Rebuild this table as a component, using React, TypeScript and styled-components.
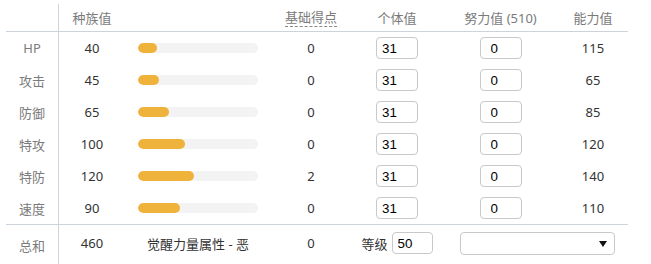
import React from 'react'
import styled, { createGlobalStyle } from 'styled-components'

const GlobalStyle = createGlobalStyle`
  body {
    margin: 0;
    background: #fff;
    font-family: "Noto Sans", "Noto Sans CJK SC", sans-serif;
  }
`

const stats = [
  { label: 'HP', base: 40, total: 115 },
  { label: '攻击', base: 45, total: 65 },
  { label: '防御', base: 65, total: 85 },
  { label: '特攻', base: 100, total: 120 },
  { label: '特防', base: 120, total: 140 },
  { label: '速度', base: 90, total: 110 },
]

const points = [0, 0, 0, 0, 2, 0]

export default function App() {
  return (
    <Page>
      <GlobalStyle />
      <Table>
        <Row $height={27} $line>
          <Label />
          <Head>种族值</Head>
          <Head />
          <Head><Dotted>基础得点</Dotted></Head>
          <Head>个体值</Head>
          <Head>努力值 (510)</Head>
          <Head>能力值</Head>
        </Row>
        {stats.map((s, i) => (
          <Row key={s.label} $height={32} $line={i === stats.length - 1}>
            <Label>{s.label}</Label>
            <Value>{s.base}</Value>
            <Cell>
              <Track>
                <Fill style={{ width: `${(s.base / 255) * 120}px` }} />
              </Track>
            </Cell>
            <Value>{points[i]}</Value>
            <Cell>
              <NumInput defaultValue="31" $pad={5} />
            </Cell>
            <Cell>
              <NumInput defaultValue="0" $pad={10} />
            </Cell>
            <Value>{s.total}</Value>
          </Row>
        ))}
        <Row $height={40}>
          <Label $offset={-4}>总和</Label>
          <Value $offset={-4}>460</Value>
          <Value $offset={-4}>觉醒力量属性 - 恶</Value>
          <Value $offset={-4}>0</Value>
          <Cell $offset={-4}>
            <LevelText>等级</LevelText>
            <NumInput defaultValue="50" $pad={5} $width={41} />
          </Cell>
          <SelectCell $offset={-4}>
            <SelectWrap>
              <Select defaultValue="">
                <option value=""></option>
              </Select>
              <Arrow width="8" height="6" viewBox="0 0 8 6">
                <path d="M0 0H8L4 6Z" fill="#111" />
              </Arrow>
            </SelectWrap>
          </SelectCell>
        </Row>
      </Table>
    </Page>
  )
}

const Page = styled.div`
  padding: 4px 0 0 6px;
`

const Table = styled.div`
  display: flex;
  flex-direction: column;
  width: 622px;
`

const Row = styled.div<{ $height: number; $line?: boolean }>`
  display: grid;
  grid-template-columns: 53px 66px 146px 80px 92px 115px 70px;
  height: ${(p) => p.$height}px;
  border-bottom: ${(p) => (p.$line ? '1px solid #cdd3dd' : 'none')};
`

const Cell = styled.div<{ $offset?: number }>`
  display: flex;
  align-items: center;
  justify-content: center;
  font-size: 13px;
  color: #333;
  margin-top: ${(p) => p.$offset ?? 0}px;
`

const Label = styled(Cell)`
  border-right: 1px solid #cdd3dd;
  margin-top: 0;
  padding-top: ${(p) => p.$offset ?? 0}px;
  color: #7b7b7b;
`

const Value = styled(Cell)``

const Head = styled(Cell)`
  color: #7a7a7a;
  margin-top: -1px;
`

const Dotted = styled.span`
  border-bottom: 1px dashed #888;
  line-height: 17px;
  margin-top: 2px;
`

const Track = styled.div`
  width: 120px;
  height: 10px;
  border-radius: 5px;
  background: #f3f3f3;
  overflow: hidden;
`

const Fill = styled.div`
  height: 100%;
  border-radius: 5px;
  background: #efb33c;
`

const NumInput = styled.input<{ $pad: number; $width?: number }>`
  box-sizing: border-box;
  width: ${(p) => p.$width ?? 42}px;
  height: 22px;
  border: 1px solid #c9c9c9;
  border-radius: 4px;
  padding: 0 0 0 ${(p) => p.$pad}px;
  font-family: "Liberation Sans", Arial, sans-serif;
  font-size: 13.33px;
  color: #000;
  outline: none;
`

const LevelText = styled.span`
  margin-right: 4px;
  color: #333;
`

const SelectCell = styled(Cell)`
  grid-column: span 2;
  justify-content: flex-start;
  padding-left: 17px;
`

const SelectWrap = styled.div`
  position: relative;
  width: 155px;
  height: 23px;
`

const Select = styled.select`
  box-sizing: border-box;
  width: 100%;
  height: 100%;
  border: 1px solid #c9c9c9;
  border-radius: 4px;
  background: #fff;
  appearance: none;
  outline: none;
`

const Arrow = styled.svg`
  position: absolute;
  right: 8px;
  top: 9px;
  pointer-events: none;
`
